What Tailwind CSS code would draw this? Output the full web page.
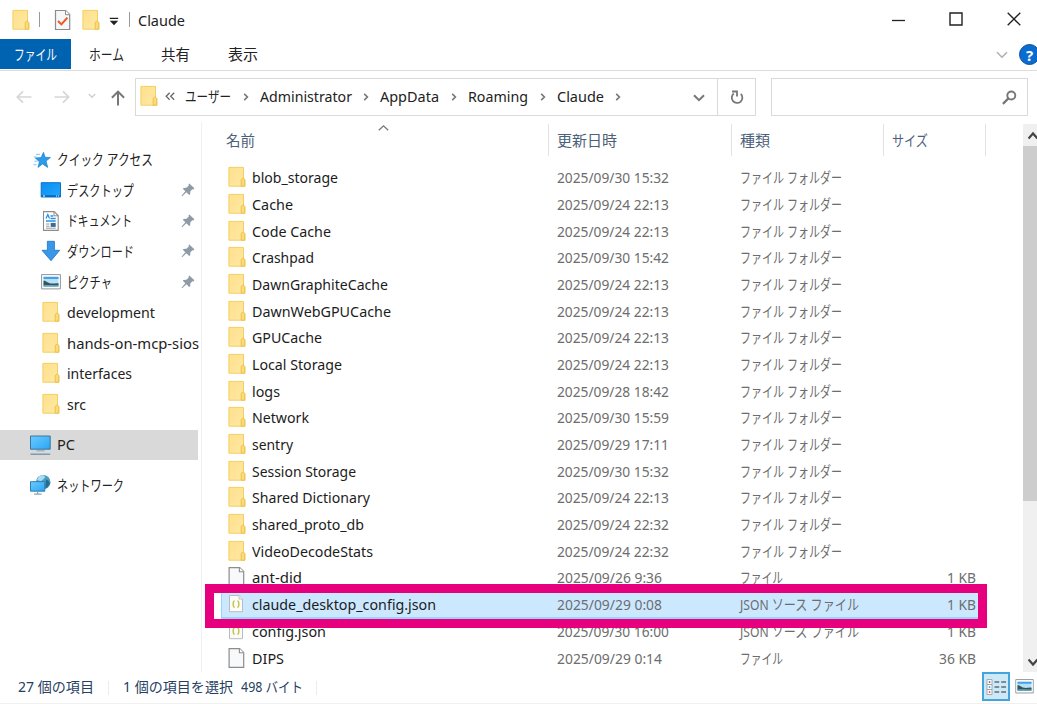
<!DOCTYPE html>
<html lang="ja">
<head>
  <meta charset="UTF-8">
  <meta name="viewport" content="width=device-width, initial-scale=1.0">
  <title>Claude</title>
  <script src="https://cdn.jsdelivr.net/npm/@tailwindcss/browser@4"></script>
</head>
<body class="relative w-[1037px] h-[704px] overflow-hidden bg-white flex flex-col font-['Noto_Sans','Noto_Sans_CJK_JP',sans-serif] text-[14.5px] leading-5 text-[#222] whitespace-nowrap">

  <svg class="absolute w-0 h-0">
    <defs>
      <linearGradient id="gFolder" x1="0" y1="0" x2="1" y2="1">
        <stop offset="0" stop-color="#ffe08c"/><stop offset="1" stop-color="#ffe9a6"/>
      </linearGradient>
      <linearGradient id="gBlue" x1="0" y1="0" x2="1" y2="1">
        <stop offset="0" stop-color="#0a8df0"/><stop offset="1" stop-color="#22a7ff"/>
      </linearGradient>
      <linearGradient id="gPc" x1="0" y1="0" x2="1" y2="1">
        <stop offset="0" stop-color="#6ccbff"/><stop offset="1" stop-color="#2aa5f5"/>
      </linearGradient>
    </defs>
    <symbol id="folder" viewBox="0 0 18 22">
      <path d="M.9 1.4h14.6v11.2l1.3 1v6.6H.9z" fill="url(#gFolder)" stroke="#f3cf62" stroke-width="1"/>
      <path d="M13.2 20.2v-6.4l1.2-1.6h1.2l1.2 1.4v6.6z" fill="#fbdc78" stroke="#e9bd45" stroke-width=".9"/>
    </symbol>
    <symbol id="file" viewBox="0 0 18 22">
      <path d="M1.1 1.6h10.6l4 4v14.8H1.1z" fill="#f8f9fa" stroke="#8c8c8c" stroke-width="1.2"/>
      <path d="M11.4 1.6v4.2h4.3" fill="#fff" stroke="#8c8c8c" stroke-width="1.1"/>
    </symbol>
    <symbol id="json" viewBox="0 0 18 22">
      <path d="M1.5 2.500h9.600l3.400 3.400v12.800h-13z" fill="#fbfbf8" stroke="#b9bcbe"/>
      <path d="M11 2.500v3.600h3.500" fill="#eee" stroke="#c4c6c8"/>
      <path d="M6.600 8C5.200 8 5.200 9 5.200 11s0 3.200 1.400 3.200M9.400 8c1.400 0 1.400 1 1.400 3s0 3.200-1.400 3.200" fill="none" stroke="#c3c650" stroke-width="1.500"/>
    </symbol>
    <symbol id="pin" viewBox="0 0 14 14">
      <path d="M8.300.6 13.400 5.200 12.400 6.400 11.300 6.200 9.300 8.500 9.200 11.200 8.200 12 5.400 9.200 1.200 13.200.5 12.700 4.300 8.200 1.800 5.800 2.600 4.900 5.400 4.800 7.800 2.600 7.500 1.400z" fill="#8e9ba6"/>
    </symbol>
    <symbol id="picture" viewBox="0 0 20 16">
      <path d="M.6.6h18.800v14.300H.6z" fill="#fff" stroke="#8f9498"/>
      <path d="M2.500 2.800h15v10h-15z" fill="#b5e0f8"/>
      <path d="M2.500 2.800h15v2.200h-15z" fill="#4a9fe6"/>
      <path d="M2.500 6.500c3 .2 4 2.600 7 2.900s5-.4 8-.2v2.600h-15z" fill="#33594f"/>
      <path d="M2.500 11.300c5-.6 8 .2 15-.3v1.800h-15z" fill="#6aa3c9"/>
    </symbol>
  </svg>

  <!-- title bar -->
  <header class="h-[39px] shrink-0 flex items-center">
    <svg class="ml-3 w-[18px] h-[22px]"><use href="#folder"/></svg>
    <div class="ml-[9px] w-px h-[15px] bg-[#999]"></div>
    <svg class="ml-[14px] w-[18px] h-[22px]" viewBox="0 0 18 22">
      <path d="M1.500 1.500h10.200l4 4v15H1.500z" fill="#f6f7f8" stroke="#8c8c8c" stroke-width="1.200"/>
      <path d="M11.500 1.500v4.200h4.200" fill="#fff" stroke="#8c8c8c"/>
      <path d="m4 12 3.400 3.400 6-6.700" fill="none" stroke="#f0561d" stroke-width="2"/>
    </svg>
    <svg class="ml-[10px] w-[18px] h-[22px]"><use href="#folder"/></svg>
    <svg class="ml-[9px] mt-[3px] w-[10px] h-[9px]" viewBox="0 0 10 9"><path d="M.8.800h8.400v1.300H.800zM.800 3.800h8.400L5 8.200z" fill="#222"/></svg>
    <div class="ml-[10px] w-px h-[15px] bg-[#999]"></div>
    <span class="ml-[8px]" data-w="47">Claude</span>
    <div class="ml-auto flex items-center mr-[16px]">
      <svg class="w-[13px] h-[14px] mr-[44px]" viewBox="0 0 13 14"><path d="M0 7.500h13" stroke="#222" stroke-width="1.300"/></svg>
      <svg class="w-[14px] h-[14px] mr-[44px] -mt-px" viewBox="0 0 14 14"><path d="M1 1h12v12H1z" fill="none" stroke="#222" stroke-width="1.400"/></svg>
      <svg class="w-[14px] h-[14px] -mt-px" viewBox="0 0 14 14"><path d="m.700.700 12.600 12.600m0-12.600L.700 13.300" stroke="#222" stroke-width="1.300"/></svg>
    </div>
  </header>

  <!-- ribbon tabs -->
  <nav class="h-8 shrink-0 flex items-start border-b border-[#dcdcdc]">
    <div class="w-[71px] h-[30px] bg-[#0063b1] text-white flex items-center pl-[14px]"><span data-w="43">ファイル</span></div>
    <div class="ml-[18px] h-[30px] flex items-center w-[72px]"><span data-w="35">ホーム</span></div>
    <div class="h-[30px] flex items-center w-[67px]"><span data-w="29">共有</span></div>
    <div class="h-[30px] flex items-center"><span data-w="30">表示</span></div>
    <svg class="ml-auto mt-[12px] w-[12px] h-[8px]" viewBox="0 0 12 8"><path d="m1 1.200 5 5 5-5" fill="none" stroke="#b0b0b0" stroke-width="1.600"/></svg>
    <div class="ml-[11px] -mr-[3px] mt-[5px] size-[21px] rounded-full border border-[#0b4f9b] bg-[#0a6bd0] text-white font-bold text-[15px] flex items-center justify-center">?</div>
  </nav>

  <!-- address bar -->
  <div class="h-[51px] shrink-0 flex items-start pt-[7px]">
    <svg class="ml-4 mt-[12px] w-4 h-[14px]" viewBox="0 0 16 14"><path d="M15.500 7H1.300M7 1.300 1.300 7 7 12.700" fill="none" stroke="#d6d6d6" stroke-width="1.700"/></svg>
    <svg class="ml-[22px] mt-[12px] w-4 h-[14px]" viewBox="0 0 16 14"><path d="M.5 7h14.200M9 1.300 14.700 7 9 12.700" fill="none" stroke="#d6d6d6" stroke-width="1.700"/></svg>
    <svg class="ml-[18px] mt-[15px] w-2 h-[6px]" viewBox="0 0 8 6"><path d="m.800 1 3.200 3.200L7.200 1" fill="none" stroke="#cfcfcf" stroke-width="1.400"/></svg>
    <svg class="ml-[15px] mt-[12px] w-[14px] h-4" viewBox="0 0 14 16"><path d="M7 15.500V1.600M.9 7.700 7 1.600l6.100 6.100" fill="none" stroke="#777" stroke-width="2"/></svg>
    <div class="ml-[10px] w-[621px] h-[38px] border border-[#d9d9d9] flex items-center">
      <svg class="ml-[4px] -mt-[3px] w-[18px] h-[22px] shrink-0"><use href="#folder"/></svg>
      <svg class="ml-[7px] -mt-[2px] w-[10px] h-[9px]" viewBox="0 0 10 9"><path d="M4.700.8 1.200 4.300l3.500 3.500M9.200.8 5.700 4.300l3.500 3.500" fill="none" stroke="#666" stroke-width="1.300"/></svg>
      <div id="crumbs" class="ml-[10px] -mt-[2px] flex items-center flex-1"></div>
      <svg class="mr-[12px] mt-[2px] w-[12px] h-[8px]" viewBox="0 0 12 8"><path d="m1 1.200 5 5 5-5" fill="none" stroke="#777" stroke-width="2"/></svg>
      <div class="w-[38px] h-full border-l border-[#d9d9d9] flex items-center justify-center">
        <svg class="w-[14px] h-[15px]" viewBox="0 0 14 15"><path d="M10.800 3.900A5.300 5.300 0 1 1 3.800 3.500" fill="none" stroke="#777" stroke-width="1.800"/><path d="M2 1.500h5v5" fill="none" stroke="#777" stroke-width="1.800"/></svg>
      </div>
    </div>
    <div class="ml-[15px] w-[257px] h-[38px] border border-[#d9d9d9] flex items-center justify-end pr-[10px]">
      <svg class="w-[15px] h-[15px]" viewBox="0 0 15 15"><circle cx="9.300" cy="5.500" r="4" fill="none" stroke="#777" stroke-width="1.900"/><path d="M6.400 8.400.9 13.900" stroke="#777" stroke-width="2.200"/></svg>
    </div>
  </div>

  <main class="h-[550px] shrink-0 flex">
    <!-- navigation pane -->
    <aside class="w-[202px] shrink-0 border-r border-[#f0f0f0] pt-[22px] overflow-hidden">
      <div class="h-[30.6px] flex items-center pl-[33px]">
        <svg class="w-[18px] h-[16px] mr-[6px] mt-px" viewBox="0 0 18 16"><path d="M10.500.3 12 5.300l5.400.2-4.300 3.600 1.600 6.300-5.200-3.500-4.500 3.500 1.400-5.700L2.300 6l5.800-.4z" fill="#2d9bea" stroke="#1c7fcd" stroke-width=".7"/><path d="M3 2.400h4M.8 5h3M1.500 9.200h3M.5 12.800h3" stroke="#7cc4f5"/></svg>
        <span data-w="96">クイック アクセス</span>
      </div>
      <div class="h-[30.6px] flex items-center pl-10 pr-[6px]">
        <svg class="w-[22px] h-[16px] mr-[5px] mt-px" viewBox="0 0 22 16"><path d="M1.200.7h19.300v14.300H1.200z" fill="url(#gBlue)" stroke="#0873cc"/><path d="M1.500 13.300h18.700v1.400H1.500z" fill="#0560ac"/><path d="M3 14h2m11 0h1m1 0h1" stroke="#fff"/></svg>
        <span data-w="67">デスクトップ</span><svg class="ml-auto mt-px w-[14px] h-[14px]"><use href="#pin"/></svg>
      </div>
      <div class="h-[30.6px] flex items-center pl-10 pr-[6px]">
        <svg class="w-[22px] h-[22px] mr-[5px] mt-px" viewBox="0 0 22 22"><path d="M3.500 1.600h10.700l4 4v14.800H3.500z" fill="#fff" stroke="#8c8c8c" stroke-width="1.100"/><path d="M14 1.600v4.200h4.200" fill="none" stroke="#8c8c8c"/><path d="m6 8.500 1.800-4 1.700 4M10.500 6h2.800M10.500 8.500h5.200M6 11h9.700" fill="none" stroke="#2593e6" stroke-width="1.300"/><path d="M6 14h3.500M6 16.200h3.500M6 18.200h9.700" stroke="#9a9a9a"/><path d="M10.700 12.900h5v4h-5z" fill="#356d96"/></svg>
        <span data-w="65">ドキュメント</span><svg class="ml-auto mt-px w-[14px] h-[14px]"><use href="#pin"/></svg>
      </div>
      <div class="h-[30.6px] flex items-center pl-10 pr-[6px]">
        <svg class="w-[22px] h-[22px] mr-[5px]" viewBox="0 0 22 22"><path d="M7.400 1.300h7v9h5.300L11 20.700 2 10.300h5.400z" fill="#3a97e8" stroke="#2679c9" stroke-width=".9"/></svg>
        <span data-w="67">ダウンロード</span><svg class="ml-auto w-[14px] h-[14px]"><use href="#pin"/></svg>
      </div>
      <div class="h-[30.6px] flex items-center pl-[41px] pr-[6px]">
        <svg class="w-5 h-4 mr-[6px]"><use href="#picture"/></svg>
        <span data-w="45">ピクチャ</span><svg class="ml-auto w-[14px] h-[14px]"><use href="#pin"/></svg>
      </div>
      <div id="quick"></div>
      <div class="mt-[11px] h-[30px] w-[198px] bg-[#d9d9d9] flex items-center pl-[29px]">
        <svg class="w-[23px] h-[22px] mr-[5px]" viewBox="0 0 23 22"><path d="M1.500 2h19.700v13.200H1.500z" fill="url(#gPc)" stroke="#39769d"/><path d="M7.500 16.800h8" stroke="#8fa3b0"/><path d="M1.500 20.200h19.700" stroke="#6f92aa" stroke-width="1.300"/></svg>
        <span class="-mt-[3px]" data-w="18">PC</span>
      </div>
      <div class="mt-[10px] h-[30px] flex items-center pl-[29px]">
        <svg class="w-[23px] h-[22px] mr-[5px]" viewBox="0 0 23 22"><circle cx="14.200" cy="8.200" r="7.300" fill="#4b9cc0"/><path d="M10 2.300c2.500-1.800 5.500-1 6 .7-.2 2-3 2.700-4 4.300L8 6z" fill="#a9dcf0"/><path d="M17 5.500c2 .5 3.600 2 3.700 4-1 2.300-2.700 4.200-4.500 5z" fill="#256a92"/><path d="M1.500 7.700h14.300v9.500H1.500z" fill="url(#gPc)" stroke="#2f7fae"/><path d="M8.600 17.500v2.300M5 20.200h7.500" stroke="#8fa3b0" stroke-width="1.300"/></svg>
        <span data-w="67">ネットワーク</span>
      </div>
    </aside>

    <!-- file list -->
    <section class="flex-1 overflow-hidden relative">
      <div class="mt-[2px] h-[32px] flex text-[#4c607a]">
        <div class="w-[347px] border-r border-[#e2e2e2] pl-[24px] flex items-center"><span data-w="29">名前</span></div>
        <div class="w-[183px] border-r border-[#e2e2e2] pl-[8px] flex items-center"><span data-w="60">更新日時</span></div>
        <div class="w-[152px] border-r border-[#e2e2e2] pl-[8px] flex items-center"><span data-w="30">種類</span></div>
        <div class="w-[102px] border-r border-[#e2e2e2] pl-[8px] flex items-center"><span data-w="36">サイズ</span></div>
      </div>
      <svg class="absolute left-[176px] top-[3px] w-[11px] h-[6px]" viewBox="0 0 11 6"><path d="M.8 5.300 5.500.9l4.700 4.400" fill="none" stroke="#777" stroke-width="1.300"/></svg>
      <div id="files" class="mt-[7.8px]"></div>
    </section>

    <!-- scrollbar -->
    <div class="mt-[2px] w-[14px] shrink-0 bg-[#f0f0f0] flex flex-col items-end overflow-hidden">
      <svg class="h-[22px] w-[9px] shrink-0" viewBox="0 0 9 22"><path d="M.5 14.500 5 9.500l4.500 5" fill="none" stroke="#444" stroke-width="2.200"/></svg>
      <div class="w-full h-[355px] shrink-0 bg-[#cdcdcd]"></div>
      <svg class="mt-auto h-[22px] w-[9px] shrink-0" viewBox="0 0 9 22"><path d="m.5 9.500 4.500 5 4.500-5" fill="none" stroke="#444" stroke-width="2.200"/></svg>
    </div>
  </main>

  <!-- status bar -->
  <footer class="flex-1 flex items-center border-b border-[#f0f0f0] text-[#26405f] text-[14px]">
    <span class="ml-[18px] -mt-[2px]" data-w="76">27 個の項目</span>
    <div class="ml-[14px] w-px h-[14px] bg-[#ececec]"></div>
    <span class="ml-[14px] -mt-[2px]" data-w="110">1 個の項目を選択</span>
    <span class="ml-[8px] -mt-[2px]" data-w="62">498 バイト</span>
    <div class="ml-[13px] w-px h-[14px] bg-[#ececec]"></div>
    <div class="ml-auto w-[28px] h-[29px] border-2 border-[#43a5dc] bg-[#cde8f7] flex items-center justify-center -mt-[2px]">
      <svg class="w-[21px] h-[18px] shrink-0" viewBox="0 0 21 18">
        <path d="M1 1.500h5v5H1zM1 6.500h5v5H1zM1 11.500h5v5H1z" fill="#fff" stroke="#9aa3a8" stroke-width=".9"/>
        <path d="M2.800 3.300h1.500v1.500H2.800z" fill="#555"/><path d="M2.800 8.300h1.500v1.500H2.800z" fill="#2e8ce0"/><path d="M2.800 13.300h1.500v1.500H2.800z" fill="#e8242b"/>
        <path d="M8.500 4h4.700m2 0H20M8.500 9h4.700m2 0H20M8.500 14h4.700m2 0H20" stroke="#5f6f78" stroke-width="1.300"/>
      </svg>
    </div>
    <svg class="ml-[5px] mr-[3px] -mt-[3px] w-[19px] h-[15px]" viewBox="0 0 20 16"><use href="#picture" width="20" height="16"/></svg>
  </footer>

  <!-- highlight frame -->
  <div class="absolute left-[205px] top-[584px] w-[782px] h-[44px] border-9 border-[#e6007e]"></div>

<script>
const crumbs = [['ユーザー', 46, 14.5], ['Administrator', 92, 14], ['AppData', 59, 14.5], ['Roaming', 60, 14.5], ['Claude', 47, 14]];
const quick = [['development', 88], ['hands-on-mcp-sios', 132], ['interfaces', 65], ['src', 19]];

const folderType = ['ファイル フォルダー', 102];
const fileType = ['ファイル', 43];
const jsonType = ['JSON ソース ファイル', 119];

// name, width, date, type, size, icon
const files = [
  ['blob_storage', 86, '2025/09/30 15:32', folderType],
  ['Cache', 41, '2025/09/24 22:13', folderType],
  ['Code Cache', 79, '2025/09/24 22:13', folderType],
  ['Crashpad', 62, '2025/09/30 15:42', folderType],
  ['DawnGraphiteCache', 136, '2025/09/24 22:13', folderType],
  ['DawnWebGPUCache', 139, '2025/09/24 22:13', folderType],
  ['GPUCache', 70, '2025/09/24 22:13', folderType],
  ['Local Storage', 90, '2025/09/24 22:13', folderType],
  ['logs', 28, '2025/09/28 18:42', folderType],
  ['Network', 57, '2025/09/30 15:59', folderType],
  ['sentry', 41, '2025/09/29 17:11', folderType],
  ['Session Storage', 104, '2025/09/30 15:32', folderType],
  ['Shared Dictionary', 118, '2025/09/24 22:13', folderType],
  ['shared_proto_db', 112, '2025/09/24 22:32', folderType],
  ['VideoDecodeStats', 121, '2025/09/24 22:32', folderType],
  ['ant-did', 50, '2025/09/26 9:36', fileType, '1 KB', 'file'],
  ['claude_desktop_config.json', 184, '2025/09/29 0:08', jsonType, '1 KB', 'json'],
  ['config.json', 74, '2025/09/30 16:00', jsonType, '1 KB', 'json'],
  ['DIPS', 32, '2025/09/29 0:14', fileType, '36 KB', 'file'],
];

document.getElementById('crumbs').innerHTML = crumbs.map(([name, w, gap]) => `
  <span data-w="${w}">${name}</span>
  <svg class="mt-[2px] h-2 w-[6px] shrink-0" style="margin-left:${gap - 3}px;margin-right:${gap - 3}px" viewBox="0 0 6 8"><path d="m1.200.9 3.200 3.100-3.200 3.100" fill="none" stroke="#777" stroke-width="1.600"/></svg>`).join('');

document.getElementById('quick').innerHTML = quick.map(([name, w]) => `
  <div class="h-[30.6px] flex items-center pl-[42px]">
    <svg class="w-[18px] h-[22px] mr-[7px] shrink-0"><use href="#folder"/></svg><span data-w="${w}">${name}</span>
  </div>`).join('');

document.getElementById('files').innerHTML = files.map(([name, w, date, type, size, icon]) => {
  const selected = name === 'claude_desktop_config.json';
  return `
  <div class="h-[26.7px] ml-[19px] w-[763px] flex items-center text-[#6d6d6d] ${selected ? 'bg-[#cce8ff] shadow-[inset_1px_0_0_#99d1ff,0_2px_0_#99d1ff]' : ''}">
    <div class="w-[336px] shrink-0 flex items-center pl-[7px] text-[#1c1c1c]">
      <svg class="w-[18px] h-[22px] mr-[6px] shrink-0"><use href="#${icon || 'folder'}"/></svg><span data-w="${w}">${name}</span>
    </div>
    <div class="w-[183px] shrink-0 flex"><span data-w="${date.length === 16 ? 112 : 105}">${date}</span></div>
    <div class="w-[152px] shrink-0 flex"><span data-w="${type[1]}">${type[0]}</span></div>
    <div class="flex-1 flex justify-end pr-[8px]">${size ? `<span data-w="${size.length === 4 ? 29 : 37}">${size}</span>` : ''}</div>
  </div>`;
}).join('');

function fitLabels() {
  document.querySelectorAll('[data-w]').forEach(el => {
    const w = Number(el.dataset.w);
    el.classList.add('block', 'shrink-0', 'origin-left');
    el.style.transform = 'none';
    el.style.width = 'max-content';
    const natural = el.getBoundingClientRect().width;
    el.style.width = w + 'px';
    el.style.transform = `scaleX(${w / natural})`;
  });
}
fitLabels();
window.addEventListener('load', fitLabels);
document.fonts.ready.then(fitLabels);
</script>

</body>
</html>
